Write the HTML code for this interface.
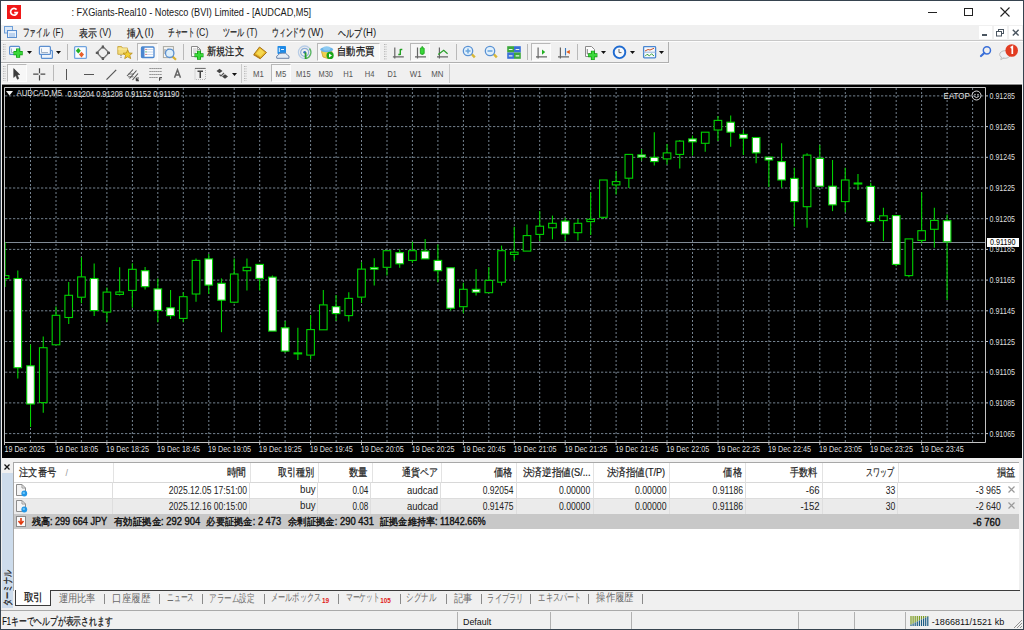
<!DOCTYPE html>
<html><head><meta charset="utf-8"><style>*{box-sizing:border-box}html,body{margin:0;padding:0}body{width:1024px;height:630px;overflow:hidden;position:relative;background:#f0f0f0;font-family:"Liberation Sans",sans-serif}.a{position:absolute}.ic{position:absolute;display:block}svg text{font-family:"Liberation Sans",sans-serif;white-space:pre}</style></head><body>
<div class="a" style="left:1px;top:1px;width:1022px;height:24px;background:#fff;"></div>
<div class="a" style="left:7px;top:5px;width:13.5px;height:13.5px;background:#f01818;"></div>
<svg class="ic" style="left:7px;top:5px" width="14" height="14" viewBox="0 0 14 14"><path d="M9.6 4.6 A3.4 3.4 0 1 0 10.3 7.6 H7.2" fill="none" stroke="#fff" stroke-width="1.7"/></svg>
<div class="a" style="left:928px;top:12px;width:9px;height:1px;background:#222;"></div>
<div class="a" style="left:964px;top:8px;width:9px;height:8px;background:transparent;border:1px solid #222"></div>
<svg class="ic" style="left:1000px;top:7px" width="10" height="10" viewBox="0 0 10 10"><path d="M0.5 0.5 L9.5 9.5 M9.5 0.5 L0.5 9.5" stroke="#222" stroke-width="1.1"/></svg>
<svg class="ic" style="left:4px;top:26px" width="13" height="12" viewBox="0 0 13 12"><rect x="0.5" y="0.5" width="8" height="6.5" fill="#dbe8f7" stroke="#6e9fd8"/><rect x="3.5" y="4.5" width="9" height="7" fill="#eaf2fb" stroke="#5b8fd0"/><path d="M5 8 h6 M5 10 h6" stroke="#8db3e2"/></svg>
<div class="a" style="left:979px;top:26px;width:13px;height:13px;background:#fff;"></div>
<div class="a" style="left:994px;top:26px;width:13px;height:13px;background:#fff;"></div>
<div class="a" style="left:1009px;top:26px;width:13px;height:13px;background:#fff;"></div>
<div class="a" style="left:982px;top:34px;width:5px;height:2px;background:#4a5560;"></div>
<svg class="ic" style="left:996px;top:29px" width="9" height="8" viewBox="0 0 9 8"><rect x="2.5" y="0.5" width="5" height="4" fill="none" stroke="#4a5560"/><rect x="0.5" y="2.5" width="5" height="4.5" fill="#fff" stroke="#4a5560"/></svg>
<svg class="ic" style="left:1012px;top:29px" width="8" height="8" viewBox="0 0 8 8"><path d="M0.8 0.8 L6.6 6.6 M6.6 0.8 L0.8 6.6" stroke="#4a5560" stroke-width="1.4"/></svg>
<div class="a" style="left:1px;top:40px;width:1022px;height:1px;background:#c8c8c8;"></div>
<div class="a" style="left:1px;top:41px;width:1022px;height:1px;background:#fdfdfd;"></div>
<div class="a" style="left:668px;top:42px;width:1px;height:21px;background:#b0b0b0;"></div>
<div class="a" style="left:1px;top:62px;width:668px;height:1px;background:#b0b0b0;"></div>
<div class="a" style="left:1px;top:63px;width:668px;height:1px;background:#fcfcfc;"></div>
<svg class="ic" style="left:3px;top:44px" width="3" height="16" viewBox="0 0 3 16"><path d="M0.5 0 V16 M2 0 V16" stroke="#b4b4b4" stroke-width="1" stroke-dasharray="1 1.4"/></svg>
<svg class="ic" style="left:0px;top:40px" width="40" height="24" viewBox="0 0 40 24"><rect x="9.6" y="6.4" width="10" height="8" rx="1" fill="#f4f8fd" stroke="#5b8fd0" stroke-width="1.2"/><path d="M11.5 8.5 V12.5 H14" fill="none" stroke="#8aa0b8" stroke-width="0.8"/><path d="M18.1 8.5 V17.7 M13.500000000000002 13.1 H22.700000000000003" stroke="#0a9a0a" stroke-width="4.1000000000000005"/><path d="M18.1 9.0 V17.2 M14.000000000000002 13.1 H22.200000000000003" stroke="#3ad83a" stroke-width="2.6"/></svg>
<svg class="ic" style="left:27px;top:51px" width="5" height="3" viewBox="0 0 5 3"><path d="M0 0H5L2.5 3Z" fill="#111"/></svg>
<svg class="ic" style="left:30px;top:40px" width="30" height="24" viewBox="0 0 30 24"><rect x="11.4" y="10.4" width="11" height="8" rx="1" fill="#eef4fb" stroke="#5b8fd0" stroke-width="1.2"/><rect x="9.4" y="6.4" width="11" height="8" rx="1" fill="#f6f9fd" stroke="#5b8fd0" stroke-width="1.2"/><path d="M11.5 8.5 V12.5 H18" fill="none" stroke="#8aa0b8" stroke-width="0.8"/></svg>
<svg class="ic" style="left:56px;top:51px" width="5" height="3" viewBox="0 0 5 3"><path d="M0 0H5L2.5 3Z" fill="#111"/></svg>
<div class="a" style="left:67px;top:44px;width:1px;height:16px;background:#b9b9b9;"></div>
<svg class="ic" style="left:70px;top:40px" width="20" height="24" viewBox="0 0 20 24"><rect x="4.6" y="6.6" width="11.8" height="11.8" rx="1" fill="#fcfdff" stroke="#6fa3de" stroke-width="1.3"/><path d="M8.3 8 L10.8 10.8 L8.3 13.6 L5.8 10.8Z" fill="#22b022"/><path d="M11.5 11.8 L14 14.6 L11.5 17.4 L9 14.6Z" fill="#e8602a"/></svg>
<svg class="ic" style="left:94px;top:44px" width="18" height="18" viewBox="0 0 18 18"><path d="M8.9 2.5 L15 8.8 L8.9 15 L2.8 8.8Z" fill="none" stroke="#777" stroke-width="1.3"/><path d="M8.9 1.5V4.5 M8.9 13V16 M1.8 8.8H4.8 M13 8.8H16" stroke="#5a5a5a" stroke-width="2.2"/></svg>
<svg class="ic" style="left:114px;top:42px" width="20" height="20" viewBox="0 0 20 20"><path d="M3.8 4.5 H7.5 L8.5 6 H13.5 V12.3 H3.8Z" fill="#f3dc7a" stroke="#c8a640" stroke-width="0.9"/><path d="M3.8 7 H13.5" stroke="#fbeea8" stroke-width="1"/><path d="M13.7 7.8 L15 11 L18.3 11.2 L15.8 13.3 L16.7 16.6 L13.7 14.8 L10.7 16.6 L11.6 13.3 L9.1 11.2 L12.4 11Z" fill="#f2d030" stroke="#b88c18" stroke-width="0.8"/><path d="M7 13 V16" stroke="#666" stroke-dasharray="1 0.8"/></svg>
<div class="a" style="left:137px;top:43px;width:21px;height:18px;background:#f7f7f7;border-top:1px solid #b8b8b8;border-left:1px solid #b8b8b8;border-right:1px solid #fdfdfd;border-bottom:1px solid #fdfdfd"></div>
<svg class="ic" style="left:139px;top:44px" width="18" height="16" viewBox="0 0 18 16"><rect x="2.5" y="3" width="12.5" height="10.5" rx="1" fill="#fff" stroke="#4a86d0" stroke-width="1.3"/><rect x="2.5" y="3" width="3" height="10.5" fill="#4a86d0"/><path d="M6.5 5.5H14M6.5 8H14M6.5 10.5H14" stroke="#c6d8f0" stroke-width="1"/><circle cx="7" cy="5.3" r="0.6" fill="#e03030"/><circle cx="7" cy="7.8" r="0.6" fill="#20a020"/><circle cx="7" cy="10.3" r="0.6" fill="#e03030"/></svg>
<svg class="ic" style="left:160px;top:44px" width="20" height="18" viewBox="0 0 20 18"><rect x="3.4" y="2.6" width="10" height="11" fill="#f6f6f4" stroke="#a8a8a0" stroke-width="1"/><path d="M5 5 V10 M8 4.5 V8" stroke="#777" stroke-width="0.8"/><path d="M12 12 L16 15.8" stroke="#d8b030" stroke-width="2.2"/><circle cx="9.7" cy="9.3" r="4.2" fill="#dceefa" stroke="#5a90d0" stroke-width="1.3"/></svg>
<div class="a" style="left:183px;top:44px;width:1px;height:16px;background:#b9b9b9;"></div>
<svg class="ic" style="left:188px;top:44px" width="18" height="18" viewBox="0 0 18 18"><path d="M3.5 2.5 H9.5 L12.5 5.5 V12.5 H3.5Z" fill="#fcfcfc" stroke="#8a8a8a" stroke-width="1"/><path d="M9.5 2.5 V5.5 H12.5" fill="none" stroke="#8a8a8a" stroke-width="0.8"/><path d="M5 5H8.5M5 7H10M5 9H8" stroke="#b0b0b0" stroke-width="0.8"/><path d="M11 6.800000000000001 V15.8 M6.5 11.3 H15.5" stroke="#0a9a0a" stroke-width="3.9"/><path d="M11 7.300000000000001 V15.3 M7.0 11.3 H15.0" stroke="#3ad83a" stroke-width="2.4"/></svg>
<svg class="ic" style="left:252px;top:45px" width="16" height="15" viewBox="0 0 16 15"><path d="M1.8 9.5 L7.5 2 L14.5 7.5 L8.5 13.6Z" fill="#e6b82a" stroke="#a87418" stroke-width="1"/><path d="M4.2 8.6 L8 3.8 L12.5 7.3 L8.5 11.6Z" fill="#f6d850"/><path d="M1.8 9.5 L8.5 13.6" stroke="#b8801a" stroke-width="1.5"/></svg>
<svg class="ic" style="left:274px;top:44px" width="18" height="16" viewBox="0 0 18 16"><rect x="3.5" y="2" width="8.5" height="8" rx="0.8" fill="#1f8ae6"/><path d="M5.3 3.8 V8 M7 5.5 H10" stroke="#e8f4ff" stroke-width="1"/><path d="M2.8 14.3 Q1.6 12 4 11.3 Q5 8.6 8.5 9.2 Q12 8.2 13.5 11 Q15.6 11.4 15 14.3Z" fill="#e4ebf4" stroke="#6a84aa" stroke-width="1"/></svg>
<svg class="ic" style="left:296px;top:44px" width="18" height="17" viewBox="0 0 18 17"><circle cx="8.7" cy="8.3" r="6.3" fill="none" stroke="#b8cde6" stroke-width="1.3"/><circle cx="8.7" cy="8.3" r="4" fill="none" stroke="#8fb0d8" stroke-width="1.2"/><path d="M13.5 4.5 A6.3 6.3 0 0 1 10 14.5" fill="none" stroke="#5cb85c" stroke-width="1.3"/><circle cx="8.7" cy="8.3" r="1.4" fill="#3a72c0"/><path d="M9.6 8.5 V15" stroke="#2aa02a" stroke-width="1.8"/></svg>
<div class="a" style="left:317px;top:43px;width:63px;height:18px;background:#f7f7f7;border-top:1px solid #b8b8b8;border-left:1px solid #b8b8b8;border-right:1px solid #fdfdfd;border-bottom:1px solid #fdfdfd"></div>
<svg class="ic" style="left:318px;top:44px" width="18" height="17" viewBox="0 0 18 17"><path d="M3.5 7.5 L5 13 L10 14.5 L14 10 L14 7.5Z" fill="#f0d050" stroke="#c8a030" stroke-width="0.8"/><ellipse cx="8.7" cy="5.6" rx="6.4" ry="2.6" fill="#6ab4e8"/><ellipse cx="8.7" cy="4.4" rx="3.6" ry="2.2" fill="#8ccaf2"/><circle cx="12.1" cy="11.4" r="3.6" fill="#1aa51a"/><path d="M11 9.4 L14 11.4 L11 13.4Z" fill="#fff"/></svg>
<svg class="ic" style="left:384px;top:44px" width="3" height="16" viewBox="0 0 3 16"><path d="M0.5 0 V16 M2 0 V16" stroke="#b4b4b4" stroke-width="1" stroke-dasharray="1 1.4"/></svg>
<svg class="ic" style="left:390px;top:44px" width="16" height="16" viewBox="0 0 16 16"><path d="M4.8 3.5 V14.5 M2.9 12.8 H13.8" stroke="#666" stroke-width="1.2"/><path d="M10.3 5 V11 M8.3 10.5 H10.3 M10.3 5.5 H12.3" stroke="#22a022" stroke-width="1.4"/></svg>
<div class="a" style="left:410px;top:43px;width:20px;height:18px;background:#f7f7f7;border-top:1px solid #b8b8b8;border-left:1px solid #b8b8b8;border-right:1px solid #fdfdfd;border-bottom:1px solid #fdfdfd"></div>
<svg class="ic" style="left:412px;top:44px" width="16" height="16" viewBox="0 0 16 16"><path d="M5.5 3.5 V14.5 M3 12.8 H14" stroke="#666" stroke-width="1.2"/><path d="M10.2 2 V11" stroke="#22a022" stroke-width="1"/><rect x="8.3" y="3.8" width="3.9" height="6.3" rx="0.8" fill="#3ad83a" stroke="#18a018" stroke-width="0.8"/></svg>
<svg class="ic" style="left:435px;top:44px" width="16" height="16" viewBox="0 0 16 16"><path d="M4.4 3.5 V14.5 M2 12.8 H13" stroke="#666" stroke-width="1.2"/><path d="M3.2 10.5 L8.7 6.2 L12.6 9.7" fill="none" stroke="#2aa02a" stroke-width="1.2"/></svg>
<div class="a" style="left:456px;top:44px;width:1px;height:16px;background:#b9b9b9;"></div>
<svg class="ic" style="left:461px;top:44px" width="16" height="16" viewBox="0 0 16 16"><path d="M5.5 5.5 L9 9" stroke="#c8a830" stroke-width="0"/><path d="M10.6 10 L13.8 13.3" stroke="#d8b838" stroke-width="2.4"/><circle cx="7" cy="7" r="4.7" fill="#e0f0fc" stroke="#5a92d4" stroke-width="1.3"/><path d="M4.5 7 H9.5" stroke="#6aa4dc" stroke-width="1.5"/><path d="M7 4.5 V9.5" stroke="#6aa4dc" stroke-width="1.5"/></svg>
<svg class="ic" style="left:483px;top:44px" width="16" height="16" viewBox="0 0 16 16"><path d="M5.5 5.5 L9 9" stroke="#c8a830" stroke-width="0"/><path d="M10.6 10 L13.8 13.3" stroke="#d8b838" stroke-width="2.4"/><circle cx="7" cy="7" r="4.7" fill="#e0f0fc" stroke="#5a92d4" stroke-width="1.3"/><path d="M4.5 7 H9.5" stroke="#6aa4dc" stroke-width="1.5"/></svg>
<svg class="ic" style="left:506px;top:45px" width="16" height="15" viewBox="0 0 16 15"><rect x="1.2" y="1.2" width="6.8" height="6.3" fill="#3ca83c"/><rect x="8" y="1.2" width="6.8" height="6.3" fill="#3a6fd8"/><rect x="1.2" y="7.5" width="6.8" height="6.3" fill="#3a6fd8"/><rect x="8" y="7.5" width="6.8" height="6.3" fill="#3ca83c"/><path d="M2.8 4.5H6.5M9.6 4.5H13.3M2.8 10.8H6.5M9.6 10.8H13.3" stroke="#e8f4e8" stroke-width="1.2"/></svg>
<div class="a" style="left:527px;top:44px;width:1px;height:16px;background:#b9b9b9;"></div>
<div class="a" style="left:531px;top:43px;width:20px;height:18px;background:#f7f7f7;border-top:1px solid #b8b8b8;border-left:1px solid #b8b8b8;border-right:1px solid #fdfdfd;border-bottom:1px solid #fdfdfd"></div>
<svg class="ic" style="left:533px;top:44px" width="16" height="16" viewBox="0 0 16 16"><path d="M5.1 3.5 V14.5 M3 12.8 H14" stroke="#666" stroke-width="1.2"/><path d="M9 5.4 L12.2 8.1 L9 10.8Z" fill="#22b022"/></svg>
<svg class="ic" style="left:555px;top:44px" width="16" height="16" viewBox="0 0 16 16"><path d="M5.4 3.5 V14.5 M3 12.8 H14" stroke="#666" stroke-width="1.2"/><path d="M10.5 4 V11.5" stroke="#3a78c0" stroke-width="1.1"/><path d="M11.2 8 L14.8 6 V10Z" fill="#e05a1a"/></svg>
<div class="a" style="left:577px;top:44px;width:1px;height:16px;background:#b9b9b9;"></div>
<svg class="ic" style="left:583px;top:44px" width="16" height="18" viewBox="0 0 16 18"><path d="M2.5 2.5 H8.5 L11.5 5.5 V12.5 H2.5Z" fill="#fcfcfc" stroke="#8a8a8a" stroke-width="1"/><path d="M4.3 5 V10 H7" fill="none" stroke="#777" stroke-width="0.9"/><path d="M9.8 6.700000000000001 V15.9 M5.200000000000001 11.3 H14.4" stroke="#0a9a0a" stroke-width="3.9"/><path d="M9.8 7.200000000000001 V15.4 M5.700000000000001 11.3 H13.9" stroke="#3ad83a" stroke-width="2.4"/></svg>
<svg class="ic" style="left:601px;top:51px" width="5" height="3" viewBox="0 0 5 3"><path d="M0 0H5L2.5 3Z" fill="#111"/></svg>
<svg class="ic" style="left:611px;top:44px" width="17" height="17" viewBox="0 0 17 17"><circle cx="8.5" cy="8.3" r="5.8" fill="#f6f9fc" stroke="#1e6ad0" stroke-width="1.9"/><path d="M8 5 V8.6 H10.5" fill="none" stroke="#555" stroke-width="0.9"/></svg>
<svg class="ic" style="left:630px;top:51px" width="5" height="3" viewBox="0 0 5 3"><path d="M0 0H5L2.5 3Z" fill="#111"/></svg>
<svg class="ic" style="left:641px;top:44px" width="17" height="16" viewBox="0 0 17 16"><rect x="2.6" y="2.6" width="12" height="11.2" rx="0.8" fill="#f6f9fd" stroke="#4a86d0" stroke-width="1.3"/><path d="M2.6 8.2H14.6" stroke="#9ab8e0" stroke-width="1"/><path d="M4 7 L7 5.5 L9 6 L13 4.3" fill="none" stroke="#c8552a" stroke-width="1"/><path d="M4 12.3 L6 10.3 L8.5 11.8 L10.5 9.8 L13 12" fill="none" stroke="#3aa03a" stroke-width="1"/></svg>
<svg class="ic" style="left:659px;top:51px" width="5" height="3" viewBox="0 0 5 3"><path d="M0 0H5L2.5 3Z" fill="#111"/></svg>
<svg class="ic" style="left:978px;top:44px" width="14" height="14" viewBox="0 0 14 14"><circle cx="8.9" cy="6.3" r="3.6" fill="none" stroke="#3a6fd8" stroke-width="1.5"/><path d="M6.3 9 L3 12" stroke="#3a6fd8" stroke-width="2.2" stroke-linecap="round"/></svg>
<svg class="ic" style="left:998px;top:42px" width="22" height="19" viewBox="0 0 22 19"><ellipse cx="7" cy="12.5" rx="5.3" ry="3.8" fill="#eef0f4" stroke="#b8b8b8" stroke-width="0.9"/><path d="M3.5 15 L2.8 17.6 L6.2 15.8" fill="#eef0f4" stroke="#b8b8b8" stroke-width="0.9"/><circle cx="13.7" cy="8.5" r="6.3" fill="#e23c22"/><path d="M12.6 5.8 L14.3 4.8 V12" fill="none" stroke="#fff" stroke-width="1.7"/></svg>
<svg class="ic" style="left:3px;top:66px" width="3" height="15" viewBox="0 0 3 15"><path d="M0.5 0 V15 M2 0 V15" stroke="#b4b4b4" stroke-width="1" stroke-dasharray="1 1.4"/></svg>
<div class="a" style="left:7px;top:64px;width:20px;height:18px;background:#f7f7f7;border-top:1px solid #b8b8b8;border-left:1px solid #b8b8b8;border-right:1px solid #fdfdfd;border-bottom:1px solid #fdfdfd"></div>
<svg class="ic" style="left:12px;top:67px" width="10" height="14" viewBox="0 0 10 14"><path d="M1.7 1.6 L7.8 7.6 L5.2 7.9 L6.8 11.6 L5.4 12.3 L3.8 8.6 L1.7 10.4Z" fill="#3c3c3c" stroke="#3c3c3c" stroke-width="0.6" stroke-linejoin="round"/></svg>
<svg class="ic" style="left:31px;top:66px" width="17" height="17" viewBox="0 0 17 17"><path d="M8.5 2.2 V7.3 M8.5 9.2 V14.4 M2.2 8.2 H7.5 M9.5 8.2 H14.3" stroke="#4a4a4a" stroke-width="1.2"/></svg>
<div class="a" style="left:53px;top:65px;width:1px;height:16px;background:#b9b9b9;"></div>
<div class="a" style="left:66px;top:69px;width:1px;height:11px;background:#555;"></div>
<div class="a" style="left:84px;top:73.5px;width:10px;height:1.3px;background:#555;"></div>
<svg class="ic" style="left:104px;top:67px" width="14" height="14" viewBox="0 0 14 14"><path d="M2.5 12.6 L12.2 2.8" stroke="#555" stroke-width="1.2"/></svg>
<svg class="ic" style="left:125px;top:66px" width="16" height="16" viewBox="0 0 16 16"><path d="M2 10 L8 3.5 M4.5 12.5 L11.5 4.5 M7.5 14 L13 7.5" stroke="#555" stroke-width="1.1"/><path d="M3.5 8 H9 M3 10.8 H8.5" stroke="#555" stroke-width="0.8"/><path d="M11.2 12 H14 M11.2 12 V14.8 H14 M11.2 13.4 H13.5" stroke="#444" stroke-width="0.9"/></svg>
<svg class="ic" style="left:148px;top:66px" width="16" height="16" viewBox="0 0 16 16"><path d="M1.5 2.5H14M1.5 5.5H14M1.5 8.5H14M1.5 11.5H10" stroke="#707070" stroke-width="1" stroke-dasharray="1.2 0.8"/><path d="M11.5 11.5 H14 M11.5 11.5 V14.8 M11.5 13 H13.5" stroke="#444" stroke-width="0.9"/></svg>
<svg class="ic" style="left:172px;top:68px" width="11" height="11" viewBox="0 0 11 11"><path d="M2.5 9.8 L5.5 1.8 L8.5 9.8 M3.6 7 H7.4" fill="none" stroke="#666" stroke-width="1.5"/></svg>
<svg class="ic" style="left:193px;top:66px" width="14" height="15" viewBox="0 0 14 15"><rect x="2" y="2.5" width="10.5" height="11" fill="none" stroke="#aaa" stroke-width="0.8" stroke-dasharray="1 1"/><path d="M2 2.4H12.5" stroke="#666" stroke-width="1"/><path d="M4.5 5.2 H10 M7.25 5.2 V12" stroke="#444" stroke-width="1.5"/></svg>
<svg class="ic" style="left:215px;top:68px" width="15" height="13" viewBox="0 0 15 13"><path d="M4.5 0.8 L7.5 3 L4.5 5.2 L1.5 3Z" fill="#444"/><path d="M10 6.3 L13 8.5 L10 10.7 L7 8.5Z" fill="#444"/><path d="M4.5 6.5 L6 8 L9 5" fill="none" stroke="#555" stroke-width="1.2"/></svg>
<svg class="ic" style="left:232px;top:73px" width="5" height="3" viewBox="0 0 5 3"><path d="M0 0H5L2.5 3Z" fill="#111"/></svg>
<div class="a" style="left:241px;top:64px;width:1px;height:20px;background:#c9c9c9;"></div>
<svg class="ic" style="left:244px;top:66px" width="3" height="15" viewBox="0 0 3 15"><path d="M0.5 0 V15 M2 0 V15" stroke="#b4b4b4" stroke-width="1" stroke-dasharray="1 1.4"/></svg>
<div class="a" style="left:271px;top:64px;width:20px;height:18px;background:#f7f7f7;border-top:1px solid #b8b8b8;border-left:1px solid #b8b8b8;border-right:1px solid #fdfdfd;border-bottom:1px solid #fdfdfd"></div>
<div class="a" style="left:449px;top:64px;width:1px;height:20px;background:#c9c9c9;"></div>
<svg width="1020" height="373" viewBox="0 0 1020 373" style="position:absolute;left:2px;top:85px">
<rect x="0" y="0" width="1020" height="373" fill="#000"/>
<line x1="3" y1="10.9" x2="983" y2="10.9" stroke="#74828f" stroke-width="1" stroke-dasharray="2.3 1.7"/>
<line x1="3" y1="41.6" x2="983" y2="41.6" stroke="#74828f" stroke-width="1" stroke-dasharray="2.3 1.7"/>
<line x1="3" y1="72.3" x2="983" y2="72.3" stroke="#74828f" stroke-width="1" stroke-dasharray="2.3 1.7"/>
<line x1="3" y1="103.0" x2="983" y2="103.0" stroke="#74828f" stroke-width="1" stroke-dasharray="2.3 1.7"/>
<line x1="3" y1="133.7" x2="983" y2="133.7" stroke="#74828f" stroke-width="1" stroke-dasharray="2.3 1.7"/>
<line x1="3" y1="164.4" x2="983" y2="164.4" stroke="#74828f" stroke-width="1" stroke-dasharray="2.3 1.7"/>
<line x1="3" y1="195.1" x2="983" y2="195.1" stroke="#74828f" stroke-width="1" stroke-dasharray="2.3 1.7"/>
<line x1="3" y1="225.8" x2="983" y2="225.8" stroke="#74828f" stroke-width="1" stroke-dasharray="2.3 1.7"/>
<line x1="3" y1="256.5" x2="983" y2="256.5" stroke="#74828f" stroke-width="1" stroke-dasharray="2.3 1.7"/>
<line x1="3" y1="287.2" x2="983" y2="287.2" stroke="#74828f" stroke-width="1" stroke-dasharray="2.3 1.7"/>
<line x1="3" y1="317.9" x2="983" y2="317.9" stroke="#74828f" stroke-width="1" stroke-dasharray="2.3 1.7"/>
<line x1="3" y1="348.6" x2="983" y2="348.6" stroke="#74828f" stroke-width="1" stroke-dasharray="2.3 1.7"/>
<line x1="28.5" y1="3" x2="28.5" y2="357" stroke="#74828f" stroke-width="1" stroke-dasharray="2 2"/>
<line x1="54.0" y1="3" x2="54.0" y2="357" stroke="#74828f" stroke-width="1" stroke-dasharray="2 2"/>
<line x1="79.4" y1="3" x2="79.4" y2="357" stroke="#74828f" stroke-width="1" stroke-dasharray="2 2"/>
<line x1="104.9" y1="3" x2="104.9" y2="357" stroke="#74828f" stroke-width="1" stroke-dasharray="2 2"/>
<line x1="130.4" y1="3" x2="130.4" y2="357" stroke="#74828f" stroke-width="1" stroke-dasharray="2 2"/>
<line x1="155.8" y1="3" x2="155.8" y2="357" stroke="#74828f" stroke-width="1" stroke-dasharray="2 2"/>
<line x1="181.3" y1="3" x2="181.3" y2="357" stroke="#74828f" stroke-width="1" stroke-dasharray="2 2"/>
<line x1="206.8" y1="3" x2="206.8" y2="357" stroke="#74828f" stroke-width="1" stroke-dasharray="2 2"/>
<line x1="232.2" y1="3" x2="232.2" y2="357" stroke="#74828f" stroke-width="1" stroke-dasharray="2 2"/>
<line x1="257.7" y1="3" x2="257.7" y2="357" stroke="#74828f" stroke-width="1" stroke-dasharray="2 2"/>
<line x1="283.1" y1="3" x2="283.1" y2="357" stroke="#74828f" stroke-width="1" stroke-dasharray="2 2"/>
<line x1="308.6" y1="3" x2="308.6" y2="357" stroke="#74828f" stroke-width="1" stroke-dasharray="2 2"/>
<line x1="334.1" y1="3" x2="334.1" y2="357" stroke="#74828f" stroke-width="1" stroke-dasharray="2 2"/>
<line x1="359.5" y1="3" x2="359.5" y2="357" stroke="#74828f" stroke-width="1" stroke-dasharray="2 2"/>
<line x1="385.0" y1="3" x2="385.0" y2="357" stroke="#74828f" stroke-width="1" stroke-dasharray="2 2"/>
<line x1="410.4" y1="3" x2="410.4" y2="357" stroke="#74828f" stroke-width="1" stroke-dasharray="2 2"/>
<line x1="435.9" y1="3" x2="435.9" y2="357" stroke="#74828f" stroke-width="1" stroke-dasharray="2 2"/>
<line x1="461.4" y1="3" x2="461.4" y2="357" stroke="#74828f" stroke-width="1" stroke-dasharray="2 2"/>
<line x1="486.8" y1="3" x2="486.8" y2="357" stroke="#74828f" stroke-width="1" stroke-dasharray="2 2"/>
<line x1="512.3" y1="3" x2="512.3" y2="357" stroke="#74828f" stroke-width="1" stroke-dasharray="2 2"/>
<line x1="537.7" y1="3" x2="537.7" y2="357" stroke="#74828f" stroke-width="1" stroke-dasharray="2 2"/>
<line x1="563.2" y1="3" x2="563.2" y2="357" stroke="#74828f" stroke-width="1" stroke-dasharray="2 2"/>
<line x1="588.7" y1="3" x2="588.7" y2="357" stroke="#74828f" stroke-width="1" stroke-dasharray="2 2"/>
<line x1="614.1" y1="3" x2="614.1" y2="357" stroke="#74828f" stroke-width="1" stroke-dasharray="2 2"/>
<line x1="639.6" y1="3" x2="639.6" y2="357" stroke="#74828f" stroke-width="1" stroke-dasharray="2 2"/>
<line x1="665.0" y1="3" x2="665.0" y2="357" stroke="#74828f" stroke-width="1" stroke-dasharray="2 2"/>
<line x1="690.5" y1="3" x2="690.5" y2="357" stroke="#74828f" stroke-width="1" stroke-dasharray="2 2"/>
<line x1="716.0" y1="3" x2="716.0" y2="357" stroke="#74828f" stroke-width="1" stroke-dasharray="2 2"/>
<line x1="741.4" y1="3" x2="741.4" y2="357" stroke="#74828f" stroke-width="1" stroke-dasharray="2 2"/>
<line x1="766.9" y1="3" x2="766.9" y2="357" stroke="#74828f" stroke-width="1" stroke-dasharray="2 2"/>
<line x1="792.3" y1="3" x2="792.3" y2="357" stroke="#74828f" stroke-width="1" stroke-dasharray="2 2"/>
<line x1="817.8" y1="3" x2="817.8" y2="357" stroke="#74828f" stroke-width="1" stroke-dasharray="2 2"/>
<line x1="843.3" y1="3" x2="843.3" y2="357" stroke="#74828f" stroke-width="1" stroke-dasharray="2 2"/>
<line x1="868.7" y1="3" x2="868.7" y2="357" stroke="#74828f" stroke-width="1" stroke-dasharray="2 2"/>
<line x1="894.2" y1="3" x2="894.2" y2="357" stroke="#74828f" stroke-width="1" stroke-dasharray="2 2"/>
<line x1="919.6" y1="3" x2="919.6" y2="357" stroke="#74828f" stroke-width="1" stroke-dasharray="2 2"/>
<line x1="945.1" y1="3" x2="945.1" y2="357" stroke="#74828f" stroke-width="1" stroke-dasharray="2 2"/>
<line x1="970.6" y1="3" x2="970.6" y2="357" stroke="#74828f" stroke-width="1" stroke-dasharray="2 2"/>
<line x1="3" y1="157.5" x2="983.5" y2="157.5" stroke="#808a95" stroke-width="1"/>
<line x1="3.07" y1="157.0" x2="3.07" y2="202.0" stroke="#00d200" stroke-width="1.1"/>
<rect x="-0.73" y="190.6" width="7.6" height="2.9" fill="#000" stroke="#00d200" stroke-width="1.1"/>
<line x1="15.80" y1="185.5" x2="15.80" y2="293.5" stroke="#00d200" stroke-width="1.1"/>
<rect x="12.00" y="193.5" width="7.6" height="89.2" fill="#fff" stroke="#00d200" stroke-width="1.1"/>
<line x1="28.53" y1="259.5" x2="28.53" y2="342.0" stroke="#00d200" stroke-width="1.1"/>
<rect x="24.73" y="280.8" width="7.6" height="38.2" fill="#fff" stroke="#00d200" stroke-width="1.1"/>
<line x1="41.26" y1="251.6" x2="41.26" y2="327.8" stroke="#00d200" stroke-width="1.1"/>
<rect x="37.46" y="262.7" width="7.6" height="54.9" fill="#000" stroke="#00d200" stroke-width="1.1"/>
<line x1="53.99" y1="221.4" x2="53.99" y2="259.8" stroke="#00d200" stroke-width="1.1"/>
<rect x="50.19" y="230.3" width="7.6" height="29.5" fill="#000" stroke="#00d200" stroke-width="1.1"/>
<line x1="66.72" y1="197.0" x2="66.72" y2="238.9" stroke="#00d200" stroke-width="1.1"/>
<rect x="62.92" y="210.3" width="7.6" height="22.2" fill="#000" stroke="#00d200" stroke-width="1.1"/>
<line x1="79.45" y1="172.2" x2="79.45" y2="218.3" stroke="#00d200" stroke-width="1.1"/>
<rect x="75.65" y="191.9" width="7.6" height="20.3" fill="#000" stroke="#00d200" stroke-width="1.1"/>
<line x1="92.18" y1="178.6" x2="92.18" y2="231.0" stroke="#00d200" stroke-width="1.1"/>
<rect x="88.38" y="193.5" width="7.6" height="32.1" fill="#fff" stroke="#00d200" stroke-width="1.1"/>
<line x1="104.91" y1="202.4" x2="104.91" y2="237.3" stroke="#00d200" stroke-width="1.1"/>
<rect x="101.11" y="207.1" width="7.6" height="20.0" fill="#000" stroke="#00d200" stroke-width="1.1"/>
<line x1="117.64" y1="182.3" x2="117.64" y2="210.5" stroke="#00d200" stroke-width="1.1"/>
<rect x="113.84" y="207.0" width="7.6" height="2.4" fill="#000" stroke="#00d200" stroke-width="1.1"/>
<line x1="130.37" y1="178.3" x2="130.37" y2="222.8" stroke="#00d200" stroke-width="1.1"/>
<rect x="126.57" y="184.3" width="7.6" height="21.1" fill="#000" stroke="#00d200" stroke-width="1.1"/>
<line x1="143.10" y1="182.1" x2="143.10" y2="204.6" stroke="#00d200" stroke-width="1.1"/>
<rect x="139.30" y="185.7" width="7.6" height="16.0" fill="#fff" stroke="#00d200" stroke-width="1.1"/>
<line x1="155.83" y1="193.4" x2="155.83" y2="237.2" stroke="#00d200" stroke-width="1.1"/>
<rect x="152.03" y="203.9" width="7.6" height="21.5" fill="#fff" stroke="#00d200" stroke-width="1.1"/>
<line x1="168.56" y1="205.0" x2="168.56" y2="233.9" stroke="#00d200" stroke-width="1.1"/>
<rect x="164.76" y="222.8" width="7.6" height="7.8" fill="#fff" stroke="#00d200" stroke-width="1.1"/>
<line x1="181.29" y1="207.2" x2="181.29" y2="237.2" stroke="#00d200" stroke-width="1.1"/>
<rect x="177.49" y="211.7" width="7.6" height="21.7" fill="#000" stroke="#00d200" stroke-width="1.1"/>
<line x1="194.02" y1="173.4" x2="194.02" y2="216.8" stroke="#00d200" stroke-width="1.1"/>
<rect x="190.22" y="175.4" width="7.6" height="33.6" fill="#000" stroke="#00d200" stroke-width="1.1"/>
<line x1="206.75" y1="169.0" x2="206.75" y2="209.0" stroke="#00d200" stroke-width="1.1"/>
<rect x="202.95" y="173.9" width="7.6" height="26.2" fill="#fff" stroke="#00d200" stroke-width="1.1"/>
<line x1="219.48" y1="193.4" x2="219.48" y2="247.2" stroke="#00d200" stroke-width="1.1"/>
<rect x="215.68" y="198.3" width="7.6" height="16.9" fill="#fff" stroke="#00d200" stroke-width="1.1"/>
<line x1="232.21" y1="173.4" x2="232.21" y2="218.3" stroke="#00d200" stroke-width="1.1"/>
<rect x="228.41" y="189.0" width="7.6" height="28.2" fill="#000" stroke="#00d200" stroke-width="1.1"/>
<line x1="244.94" y1="173.4" x2="244.94" y2="205.4" stroke="#00d200" stroke-width="1.1"/>
<rect x="241.14" y="182.3" width="7.6" height="3.4" fill="#000" stroke="#00d200" stroke-width="1.1"/>
<line x1="257.67" y1="179.0" x2="257.67" y2="205.4" stroke="#00d200" stroke-width="1.1"/>
<rect x="253.87" y="179.4" width="7.6" height="14.0" fill="#fff" stroke="#00d200" stroke-width="1.1"/>
<line x1="270.40" y1="190.6" x2="270.40" y2="246.1" stroke="#00d200" stroke-width="1.1"/>
<rect x="266.60" y="192.1" width="7.6" height="54.0" fill="#fff" stroke="#00d200" stroke-width="1.1"/>
<line x1="283.13" y1="236.1" x2="283.13" y2="267.7" stroke="#00d200" stroke-width="1.1"/>
<rect x="279.33" y="242.8" width="7.6" height="23.3" fill="#fff" stroke="#00d200" stroke-width="1.1"/>
<line x1="295.86" y1="242.8" x2="295.86" y2="275.0" stroke="#00d200" stroke-width="1.1"/>
<rect x="292.06" y="267.9" width="7.6" height="1.0" fill="#000" stroke="#00d200" stroke-width="1.1"/>
<line x1="308.59" y1="230.1" x2="308.59" y2="274.6" stroke="#00d200" stroke-width="1.1"/>
<rect x="304.79" y="244.6" width="7.6" height="25.5" fill="#000" stroke="#00d200" stroke-width="1.1"/>
<line x1="321.32" y1="205.0" x2="321.32" y2="244.8" stroke="#00d200" stroke-width="1.1"/>
<rect x="317.52" y="219.9" width="7.6" height="24.9" fill="#000" stroke="#00d200" stroke-width="1.1"/>
<line x1="334.05" y1="210.1" x2="334.05" y2="236.1" stroke="#00d200" stroke-width="1.1"/>
<rect x="330.25" y="221.7" width="7.6" height="6.9" fill="#fff" stroke="#00d200" stroke-width="1.1"/>
<line x1="346.78" y1="207.2" x2="346.78" y2="236.6" stroke="#00d200" stroke-width="1.1"/>
<rect x="342.98" y="213.4" width="7.6" height="17.2" fill="#000" stroke="#00d200" stroke-width="1.1"/>
<line x1="359.51" y1="177.2" x2="359.51" y2="217.9" stroke="#00d200" stroke-width="1.1"/>
<rect x="355.71" y="184.1" width="7.6" height="28.0" fill="#000" stroke="#00d200" stroke-width="1.1"/>
<line x1="372.24" y1="173.3" x2="372.24" y2="200.4" stroke="#00d200" stroke-width="1.1"/>
<rect x="368.44" y="182.5" width="7.6" height="1.7" fill="#fff" stroke="#00d200" stroke-width="1.1"/>
<line x1="384.97" y1="165.7" x2="384.97" y2="190.6" stroke="#00d200" stroke-width="1.1"/>
<rect x="381.17" y="165.7" width="7.6" height="16.6" fill="#000" stroke="#00d200" stroke-width="1.1"/>
<line x1="397.70" y1="164.3" x2="397.70" y2="182.8" stroke="#00d200" stroke-width="1.1"/>
<rect x="393.90" y="167.7" width="7.6" height="11.1" fill="#fff" stroke="#00d200" stroke-width="1.1"/>
<line x1="410.43" y1="156.8" x2="410.43" y2="177.7" stroke="#00d200" stroke-width="1.1"/>
<rect x="406.63" y="165.7" width="7.6" height="9.7" fill="#000" stroke="#00d200" stroke-width="1.1"/>
<line x1="423.16" y1="153.9" x2="423.16" y2="173.9" stroke="#00d200" stroke-width="1.1"/>
<rect x="419.36" y="166.1" width="7.6" height="7.8" fill="#fff" stroke="#00d200" stroke-width="1.1"/>
<line x1="435.89" y1="159.4" x2="435.89" y2="197.2" stroke="#00d200" stroke-width="1.1"/>
<rect x="432.09" y="175.4" width="7.6" height="10.3" fill="#fff" stroke="#00d200" stroke-width="1.1"/>
<line x1="448.62" y1="182.8" x2="448.62" y2="225.4" stroke="#00d200" stroke-width="1.1"/>
<rect x="444.82" y="182.8" width="7.6" height="40.4" fill="#fff" stroke="#00d200" stroke-width="1.1"/>
<line x1="461.35" y1="197.7" x2="461.35" y2="228.3" stroke="#00d200" stroke-width="1.1"/>
<rect x="457.55" y="204.3" width="7.6" height="17.4" fill="#000" stroke="#00d200" stroke-width="1.1"/>
<line x1="474.08" y1="183.9" x2="474.08" y2="210.6" stroke="#00d200" stroke-width="1.1"/>
<rect x="470.28" y="204.3" width="7.6" height="2.9" fill="#fff" stroke="#00d200" stroke-width="1.1"/>
<line x1="486.81" y1="182.1" x2="486.81" y2="207.7" stroke="#00d200" stroke-width="1.1"/>
<rect x="483.01" y="195.4" width="7.6" height="12.3" fill="#000" stroke="#00d200" stroke-width="1.1"/>
<line x1="499.54" y1="160.6" x2="499.54" y2="200.6" stroke="#00d200" stroke-width="1.1"/>
<rect x="495.74" y="165.7" width="7.6" height="31.5" fill="#000" stroke="#00d200" stroke-width="1.1"/>
<line x1="512.27" y1="141.7" x2="512.27" y2="175.7" stroke="#00d200" stroke-width="1.1"/>
<rect x="508.47" y="167.2" width="7.6" height="2.2" fill="#000" stroke="#00d200" stroke-width="1.1"/>
<line x1="525.00" y1="139.4" x2="525.00" y2="166.1" stroke="#00d200" stroke-width="1.1"/>
<rect x="521.20" y="150.6" width="7.6" height="15.5" fill="#000" stroke="#00d200" stroke-width="1.1"/>
<line x1="537.73" y1="126.1" x2="537.73" y2="156.1" stroke="#00d200" stroke-width="1.1"/>
<rect x="533.93" y="141.2" width="7.6" height="8.2" fill="#000" stroke="#00d200" stroke-width="1.1"/>
<line x1="550.46" y1="130.6" x2="550.46" y2="154.3" stroke="#00d200" stroke-width="1.1"/>
<rect x="546.66" y="138.3" width="7.6" height="4.5" fill="#000" stroke="#00d200" stroke-width="1.1"/>
<line x1="563.19" y1="132.8" x2="563.19" y2="156.1" stroke="#00d200" stroke-width="1.1"/>
<rect x="559.39" y="136.1" width="7.6" height="12.9" fill="#fff" stroke="#00d200" stroke-width="1.1"/>
<line x1="575.92" y1="133.9" x2="575.92" y2="155.4" stroke="#00d200" stroke-width="1.1"/>
<rect x="572.12" y="138.3" width="7.6" height="9.4" fill="#000" stroke="#00d200" stroke-width="1.1"/>
<line x1="588.65" y1="107.2" x2="588.65" y2="149.9" stroke="#00d200" stroke-width="1.1"/>
<rect x="584.85" y="134.3" width="7.6" height="2.3" fill="#000" stroke="#00d200" stroke-width="1.1"/>
<line x1="601.38" y1="95.0" x2="601.38" y2="133.9" stroke="#00d200" stroke-width="1.1"/>
<rect x="597.58" y="95.0" width="7.6" height="37.3" fill="#000" stroke="#00d200" stroke-width="1.1"/>
<line x1="614.11" y1="86.1" x2="614.11" y2="109.4" stroke="#00d200" stroke-width="1.1"/>
<rect x="610.31" y="96.6" width="7.6" height="3.3" fill="#000" stroke="#00d200" stroke-width="1.1"/>
<line x1="626.84" y1="69.4" x2="626.84" y2="103.0" stroke="#00d200" stroke-width="1.1"/>
<rect x="623.04" y="69.4" width="7.6" height="23.8" fill="#000" stroke="#00d200" stroke-width="1.1"/>
<line x1="639.57" y1="64.3" x2="639.57" y2="75.4" stroke="#00d200" stroke-width="1.1"/>
<rect x="635.77" y="69.9" width="7.6" height="2.2" fill="#fff" stroke="#00d200" stroke-width="1.1"/>
<line x1="652.30" y1="47.2" x2="652.30" y2="80.6" stroke="#00d200" stroke-width="1.1"/>
<rect x="648.50" y="72.3" width="7.6" height="4.3" fill="#fff" stroke="#00d200" stroke-width="1.1"/>
<line x1="665.03" y1="59.0" x2="665.03" y2="79.4" stroke="#00d200" stroke-width="1.1"/>
<rect x="661.23" y="67.9" width="7.6" height="6.0" fill="#000" stroke="#00d200" stroke-width="1.1"/>
<line x1="677.76" y1="55.0" x2="677.76" y2="83.4" stroke="#00d200" stroke-width="1.1"/>
<rect x="673.96" y="56.1" width="7.6" height="13.3" fill="#000" stroke="#00d200" stroke-width="1.1"/>
<line x1="690.49" y1="50.6" x2="690.49" y2="70.6" stroke="#00d200" stroke-width="1.1"/>
<rect x="686.69" y="53.9" width="7.6" height="2.9" fill="#fff" stroke="#00d200" stroke-width="1.1"/>
<line x1="703.22" y1="47.2" x2="703.22" y2="66.8" stroke="#00d200" stroke-width="1.1"/>
<rect x="699.42" y="47.2" width="7.6" height="11.1" fill="#000" stroke="#00d200" stroke-width="1.1"/>
<line x1="715.95" y1="31.0" x2="715.95" y2="56.1" stroke="#00d200" stroke-width="1.1"/>
<rect x="712.15" y="35.4" width="7.6" height="9.6" fill="#000" stroke="#00d200" stroke-width="1.1"/>
<line x1="728.68" y1="30.6" x2="728.68" y2="61.7" stroke="#00d200" stroke-width="1.1"/>
<rect x="724.88" y="37.2" width="7.6" height="10.0" fill="#fff" stroke="#00d200" stroke-width="1.1"/>
<line x1="741.41" y1="45.0" x2="741.41" y2="70.1" stroke="#00d200" stroke-width="1.1"/>
<rect x="737.61" y="49.4" width="7.6" height="3.8" fill="#fff" stroke="#00d200" stroke-width="1.1"/>
<line x1="754.14" y1="52.5" x2="754.14" y2="78.3" stroke="#00d200" stroke-width="1.1"/>
<rect x="750.34" y="52.5" width="7.6" height="15.4" fill="#fff" stroke="#00d200" stroke-width="1.1"/>
<line x1="766.87" y1="72.0" x2="766.87" y2="102.1" stroke="#00d200" stroke-width="1.1"/>
<rect x="763.07" y="72.1" width="7.6" height="2.9" fill="#fff" stroke="#00d200" stroke-width="1.1"/>
<line x1="779.60" y1="58.3" x2="779.60" y2="102.8" stroke="#00d200" stroke-width="1.1"/>
<rect x="775.80" y="76.6" width="7.6" height="18.4" fill="#fff" stroke="#00d200" stroke-width="1.1"/>
<line x1="792.33" y1="82.8" x2="792.33" y2="141.7" stroke="#00d200" stroke-width="1.1"/>
<rect x="788.53" y="93.4" width="7.6" height="23.2" fill="#fff" stroke="#00d200" stroke-width="1.1"/>
<line x1="805.06" y1="68.3" x2="805.06" y2="142.8" stroke="#00d200" stroke-width="1.1"/>
<rect x="801.26" y="70.1" width="7.6" height="51.6" fill="#000" stroke="#00d200" stroke-width="1.1"/>
<line x1="817.79" y1="59.9" x2="817.79" y2="101.2" stroke="#00d200" stroke-width="1.1"/>
<rect x="813.99" y="73.4" width="7.6" height="27.8" fill="#fff" stroke="#00d200" stroke-width="1.1"/>
<line x1="830.52" y1="75.0" x2="830.52" y2="126.1" stroke="#00d200" stroke-width="1.1"/>
<rect x="826.72" y="101.2" width="7.6" height="18.7" fill="#fff" stroke="#00d200" stroke-width="1.1"/>
<line x1="843.25" y1="82.8" x2="843.25" y2="127.2" stroke="#00d200" stroke-width="1.1"/>
<rect x="839.45" y="95.0" width="7.6" height="21.6" fill="#000" stroke="#00d200" stroke-width="1.1"/>
<line x1="855.98" y1="89.0" x2="855.98" y2="105.0" stroke="#00d200" stroke-width="1.1"/>
<rect x="852.18" y="98.0" width="7.6" height="1.0" fill="#000" stroke="#00d200" stroke-width="1.1"/>
<line x1="868.71" y1="97.7" x2="868.71" y2="136.6" stroke="#00d200" stroke-width="1.1"/>
<rect x="864.91" y="101.4" width="7.6" height="35.2" fill="#fff" stroke="#00d200" stroke-width="1.1"/>
<line x1="881.44" y1="122.8" x2="881.44" y2="156.1" stroke="#00d200" stroke-width="1.1"/>
<rect x="877.64" y="130.8" width="7.6" height="4.8" fill="#000" stroke="#00d200" stroke-width="1.1"/>
<line x1="894.17" y1="130.6" x2="894.17" y2="181.2" stroke="#00d200" stroke-width="1.1"/>
<rect x="890.37" y="130.6" width="7.6" height="48.8" fill="#fff" stroke="#00d200" stroke-width="1.1"/>
<line x1="906.90" y1="153.9" x2="906.90" y2="192.3" stroke="#00d200" stroke-width="1.1"/>
<rect x="903.10" y="153.9" width="7.6" height="36.7" fill="#000" stroke="#00d200" stroke-width="1.1"/>
<line x1="919.63" y1="107.2" x2="919.63" y2="158.3" stroke="#00d200" stroke-width="1.1"/>
<rect x="915.83" y="145.7" width="7.6" height="9.7" fill="#000" stroke="#00d200" stroke-width="1.1"/>
<line x1="932.36" y1="122.8" x2="932.36" y2="162.8" stroke="#00d200" stroke-width="1.1"/>
<rect x="928.56" y="135.4" width="7.6" height="8.9" fill="#000" stroke="#00d200" stroke-width="1.1"/>
<line x1="945.09" y1="129.4" x2="945.09" y2="215.0" stroke="#00d200" stroke-width="1.1"/>
<rect x="941.29" y="135.7" width="7.6" height="21.1" fill="#fff" stroke="#00d200" stroke-width="1.1"/>
<path d="M2.5 2.5 H983.5 V357.5 H2.5 Z" fill="none" stroke="#c4c4c4" stroke-width="1"/>
<rect x="0" y="0" width="2" height="373" fill="#000"/>
<line x1="2.5" y1="357" x2="2.5" y2="360" stroke="#c4c4c4"/>
<line x1="54.0" y1="357" x2="54.0" y2="360" stroke="#c4c4c4"/>
<line x1="104.9" y1="357" x2="104.9" y2="360" stroke="#c4c4c4"/>
<line x1="155.8" y1="357" x2="155.8" y2="360" stroke="#c4c4c4"/>
<line x1="206.8" y1="357" x2="206.8" y2="360" stroke="#c4c4c4"/>
<line x1="257.7" y1="357" x2="257.7" y2="360" stroke="#c4c4c4"/>
<line x1="308.6" y1="357" x2="308.6" y2="360" stroke="#c4c4c4"/>
<line x1="359.5" y1="357" x2="359.5" y2="360" stroke="#c4c4c4"/>
<line x1="410.4" y1="357" x2="410.4" y2="360" stroke="#c4c4c4"/>
<line x1="461.4" y1="357" x2="461.4" y2="360" stroke="#c4c4c4"/>
<line x1="512.3" y1="357" x2="512.3" y2="360" stroke="#c4c4c4"/>
<line x1="563.2" y1="357" x2="563.2" y2="360" stroke="#c4c4c4"/>
<line x1="614.1" y1="357" x2="614.1" y2="360" stroke="#c4c4c4"/>
<line x1="665.0" y1="357" x2="665.0" y2="360" stroke="#c4c4c4"/>
<line x1="716.0" y1="357" x2="716.0" y2="360" stroke="#c4c4c4"/>
<line x1="766.9" y1="357" x2="766.9" y2="360" stroke="#c4c4c4"/>
<line x1="817.8" y1="357" x2="817.8" y2="360" stroke="#c4c4c4"/>
<line x1="868.7" y1="357" x2="868.7" y2="360" stroke="#c4c4c4"/>
<line x1="919.6" y1="357" x2="919.6" y2="360" stroke="#c4c4c4"/>
<line x1="983.5" y1="10.9" x2="986" y2="10.9" stroke="#c4c4c4"/>
<line x1="983.5" y1="41.6" x2="986" y2="41.6" stroke="#c4c4c4"/>
<line x1="983.5" y1="72.3" x2="986" y2="72.3" stroke="#c4c4c4"/>
<line x1="983.5" y1="103.0" x2="986" y2="103.0" stroke="#c4c4c4"/>
<line x1="983.5" y1="133.7" x2="986" y2="133.7" stroke="#c4c4c4"/>
<line x1="983.5" y1="164.4" x2="986" y2="164.4" stroke="#c4c4c4"/>
<line x1="983.5" y1="195.1" x2="986" y2="195.1" stroke="#c4c4c4"/>
<line x1="983.5" y1="225.8" x2="986" y2="225.8" stroke="#c4c4c4"/>
<line x1="983.5" y1="256.5" x2="986" y2="256.5" stroke="#c4c4c4"/>
<line x1="983.5" y1="287.2" x2="986" y2="287.2" stroke="#c4c4c4"/>
<line x1="983.5" y1="317.9" x2="986" y2="317.9" stroke="#c4c4c4"/>
<line x1="983.5" y1="348.6" x2="986" y2="348.6" stroke="#c4c4c4"/>
</svg>
<div class="a" style="left:1px;top:83px;width:1022px;height:1px;background:#f8f8f8;"></div>
<div class="a" style="left:2px;top:84px;width:1020px;height:1px;background:#8a8a8a;"></div>
<div class="a" style="left:987px;top:238px;width:32px;height:9px;background:#fff;"></div>
<svg class="ic" style="left:6px;top:91px" width="7" height="5" viewBox="0 0 7 5"><path d="M0 0 H7 L3.5 4.5 Z" fill="#f0f0f0"/></svg>
<svg class="ic" style="left:971px;top:90px" width="11" height="11" viewBox="0 0 11 11"><circle cx="5.5" cy="5.5" r="4.5" fill="none" stroke="#e0e0e0"/><circle cx="4" cy="4.5" r="0.7" fill="#e0e0e0"/><circle cx="7" cy="4.5" r="0.7" fill="#e0e0e0"/><path d="M3.3 6.5 Q5.5 8.6 7.7 6.5" fill="none" stroke="#e0e0e0"/></svg>
<div class="a" style="left:1px;top:458px;width:1022px;height:152px;background:#f0f0f0;"></div>
<svg class="ic" style="left:4px;top:464px" width="6" height="6" viewBox="0 0 6 6"><path d="M0.5 0.5 L5.5 5.5 M5.5 0.5 L0.5 5.5" stroke="#111" stroke-width="1.3"/></svg>
<div class="a" style="left:2px;top:473px;width:11px;height:135px;background:#cddcec;"></div>
<div class="a" style="left:13px;top:462px;width:1006px;height:129px;background:#fff;border-top:1px solid #a8a8a8;border-left:1px solid #a8a8a8"></div>
<div class="a" style="left:14px;top:481.5px;width:1005px;height:1px;background:#d8d8d8;"></div>
<div class="a" style="left:112.5px;top:463px;width:1px;height:19px;background:#e3e3e3;"></div>
<div class="a" style="left:250px;top:463px;width:1px;height:19px;background:#e3e3e3;"></div>
<div class="a" style="left:318px;top:463px;width:1px;height:19px;background:#e3e3e3;"></div>
<div class="a" style="left:371.5px;top:463px;width:1px;height:19px;background:#e3e3e3;"></div>
<div class="a" style="left:440.5px;top:463px;width:1px;height:19px;background:#e3e3e3;"></div>
<div class="a" style="left:516px;top:463px;width:1px;height:19px;background:#e3e3e3;"></div>
<div class="a" style="left:593px;top:463px;width:1px;height:19px;background:#e3e3e3;"></div>
<div class="a" style="left:669px;top:463px;width:1px;height:19px;background:#e3e3e3;"></div>
<div class="a" style="left:745.3px;top:463px;width:1px;height:19px;background:#e3e3e3;"></div>
<div class="a" style="left:821.7px;top:463px;width:1px;height:19px;background:#e3e3e3;"></div>
<div class="a" style="left:897.5px;top:463px;width:1px;height:19px;background:#e3e3e3;"></div>
<div class="a" style="left:14px;top:498px;width:1005px;height:16px;background:#ebebeb;"></div>
<div class="a" style="left:14px;top:497.5px;width:1005px;height:1px;background:#dcdcdc;"></div>
<div class="a" style="left:14px;top:514px;width:1005px;height:15px;background:#c8c8c8;"></div>
<div class="a" style="left:112px;top:482px;width:1px;height:16px;background:#dedede;"></div>
<div class="a" style="left:249px;top:482px;width:1px;height:16px;background:#dedede;"></div>
<div class="a" style="left:316.5px;top:482px;width:1px;height:16px;background:#dedede;"></div>
<div class="a" style="left:369.5px;top:482px;width:1px;height:16px;background:#dedede;"></div>
<div class="a" style="left:440px;top:482px;width:1px;height:16px;background:#dedede;"></div>
<div class="a" style="left:515.5px;top:482px;width:1px;height:16px;background:#dedede;"></div>
<div class="a" style="left:592.5px;top:482px;width:1px;height:16px;background:#dedede;"></div>
<div class="a" style="left:668.5px;top:482px;width:1px;height:16px;background:#dedede;"></div>
<div class="a" style="left:745px;top:482px;width:1px;height:16px;background:#dedede;"></div>
<div class="a" style="left:821.5px;top:482px;width:1px;height:16px;background:#dedede;"></div>
<div class="a" style="left:897px;top:482px;width:1px;height:16px;background:#dedede;"></div>
<svg class="ic" style="left:16px;top:484px" width="12" height="13" viewBox="0 0 12 13"><path d="M0.5 0.5 H6 L9.5 4 V11.5 H0.5 Z" fill="#f4f4f4" stroke="#8c8c8c"/><path d="M6 0.5 V4 H9.5" fill="none" stroke="#9a9a9a"/><circle cx="8.3" cy="9.5" r="2.9" fill="#2196e6"/><circle cx="7.8" cy="8.9" r="1.2" fill="#6cc4f6"/></svg>
<svg class="ic" style="left:1008px;top:486px" width="7" height="7" viewBox="0 0 7 7"><path d="M0.5 0.5 L6.5 6.5 M6.5 0.5 L0.5 6.5" stroke="#9a9a9a" stroke-width="1.2"/></svg>
<div class="a" style="left:112px;top:498px;width:1px;height:16px;background:#dedede;"></div>
<div class="a" style="left:249px;top:498px;width:1px;height:16px;background:#dedede;"></div>
<div class="a" style="left:316.5px;top:498px;width:1px;height:16px;background:#dedede;"></div>
<div class="a" style="left:369.5px;top:498px;width:1px;height:16px;background:#dedede;"></div>
<div class="a" style="left:440px;top:498px;width:1px;height:16px;background:#dedede;"></div>
<div class="a" style="left:515.5px;top:498px;width:1px;height:16px;background:#dedede;"></div>
<div class="a" style="left:592.5px;top:498px;width:1px;height:16px;background:#dedede;"></div>
<div class="a" style="left:668.5px;top:498px;width:1px;height:16px;background:#dedede;"></div>
<div class="a" style="left:745px;top:498px;width:1px;height:16px;background:#dedede;"></div>
<div class="a" style="left:821.5px;top:498px;width:1px;height:16px;background:#dedede;"></div>
<div class="a" style="left:897px;top:498px;width:1px;height:16px;background:#dedede;"></div>
<svg class="ic" style="left:16px;top:500px" width="12" height="13" viewBox="0 0 12 13"><path d="M0.5 0.5 H6 L9.5 4 V11.5 H0.5 Z" fill="#f4f4f4" stroke="#8c8c8c"/><path d="M6 0.5 V4 H9.5" fill="none" stroke="#9a9a9a"/><circle cx="8.3" cy="9.5" r="2.9" fill="#2196e6"/><circle cx="7.8" cy="8.9" r="1.2" fill="#6cc4f6"/></svg>
<svg class="ic" style="left:1008px;top:502px" width="7" height="7" viewBox="0 0 7 7"><path d="M0.5 0.5 L6.5 6.5 M6.5 0.5 L0.5 6.5" stroke="#9a9a9a" stroke-width="1.2"/></svg>
<svg class="ic" style="left:16px;top:516px" width="10" height="11" viewBox="0 0 10 11"><rect x="0.5" y="0.5" width="9" height="10" fill="#fbfbfb" stroke="#8a8a8a"/><path d="M5 2 V7 M2.5 5 L5 8 L7.5 5" fill="none" stroke="#e03a10" stroke-width="1.6"/></svg>
<div class="a" style="left:50px;top:590px;width:970px;height:1px;background:#3c3c3c;"></div>
<div class="a" style="left:15px;top:590px;width:36px;height:16px;background:#fff;border-left:1px solid #3c3c3c;border-right:1px solid #3c3c3c;border-bottom:1px solid #3c3c3c"></div>
<div class="a" style="left:104px;top:594px;width:1px;height:10px;background:#8a8a8a;"></div>
<div class="a" style="left:159px;top:594px;width:1px;height:10px;background:#8a8a8a;"></div>
<div class="a" style="left:202px;top:594px;width:1px;height:10px;background:#8a8a8a;"></div>
<div class="a" style="left:264px;top:594px;width:1px;height:10px;background:#8a8a8a;"></div>
<div class="a" style="left:338px;top:594px;width:1px;height:10px;background:#8a8a8a;"></div>
<div class="a" style="left:400px;top:594px;width:1px;height:10px;background:#8a8a8a;"></div>
<div class="a" style="left:446px;top:594px;width:1px;height:10px;background:#8a8a8a;"></div>
<div class="a" style="left:481px;top:594px;width:1px;height:10px;background:#8a8a8a;"></div>
<div class="a" style="left:530px;top:594px;width:1px;height:10px;background:#8a8a8a;"></div>
<div class="a" style="left:588px;top:594px;width:1px;height:10px;background:#8a8a8a;"></div>
<div class="a" style="left:642px;top:594px;width:1px;height:10px;background:#8a8a8a;"></div>
<div class="a" style="left:1px;top:610px;width:1022px;height:1px;background:#a9a9a9;"></div>
<div class="a" style="left:457px;top:612px;width:1px;height:17px;background:#b0b0b0;"></div>
<div class="a" style="left:550px;top:612px;width:1px;height:17px;background:#b0b0b0;"></div>
<div class="a" style="left:631px;top:612px;width:1px;height:17px;background:#b0b0b0;"></div>
<div class="a" style="left:798px;top:612px;width:1px;height:17px;background:#b0b0b0;"></div>
<div class="a" style="left:854px;top:612px;width:1px;height:17px;background:#b0b0b0;"></div>
<div class="a" style="left:905px;top:612px;width:1px;height:17px;background:#b0b0b0;"></div>
<svg class="ic" style="left:910px;top:615px" width="20" height="12" viewBox="0 0 20 12"><rect x="0.40" y="1" width="1.2" height="8.5" fill="#7c9c22"/><rect x="0.40" y="9.5" width="1.2" height="1.5" fill="#1b5c84"/><rect x="2.50" y="1" width="1.2" height="7.5" fill="#7c9c22"/><rect x="2.50" y="8.5" width="1.2" height="2.5" fill="#1b5c84"/><rect x="4.60" y="1" width="1.2" height="6.5" fill="#7c9c22"/><rect x="4.60" y="7.5" width="1.2" height="3.5" fill="#1b5c84"/><rect x="6.70" y="1" width="1.2" height="5.5" fill="#7c9c22"/><rect x="6.70" y="6.5" width="1.2" height="4.5" fill="#1b5c84"/><rect x="8.80" y="1" width="1.2" height="4.5" fill="#7c9c22"/><rect x="8.80" y="5.5" width="1.2" height="5.5" fill="#1b5c84"/><rect x="10.90" y="1" width="1.2" height="3.5" fill="#7c9c22"/><rect x="10.90" y="4.5" width="1.2" height="6.5" fill="#1b5c84"/><rect x="13.00" y="1" width="1.2" height="2.5" fill="#7c9c22"/><rect x="13.00" y="3.5" width="1.2" height="7.5" fill="#1b5c84"/><rect x="15.10" y="1" width="1.2" height="1.5" fill="#7c9c22"/><rect x="15.10" y="2.5" width="1.2" height="8.5" fill="#1b5c84"/><rect x="17.20" y="1" width="1.2" height="0.5" fill="#7c9c22"/><rect x="17.20" y="1.5" width="1.2" height="9.5" fill="#1b5c84"/></svg>
<svg class="ic" style="left:1012px;top:618px" width="11" height="11" viewBox="0 0 11 11"><path d="M10 2 L2 10 M10 5 L5 10 M10 8 L8 10" stroke="#777" stroke-width="0.8"/></svg>
<div class="a" style="left:0px;top:0px;width:1024px;height:1px;background:#36434f;"></div>
<div class="a" style="left:0px;top:0px;width:1px;height:630px;background:#36434f;"></div>
<div class="a" style="left:1023px;top:0px;width:1px;height:630px;background:#36434f;"></div>
<div class="a" style="left:0px;top:629px;width:1024px;height:1px;background:#36434f;"></div>
<svg style="position:absolute;left:0;top:0" width="1024" height="630" viewBox="0 0 1024 630">
<text x="71.40" y="16.10" font-size="10" fill="#1a1a1a" textLength="239.70" lengthAdjust="spacingAndGlyphs">: FXGiants-Real10 - Notesco (BVI) Limited - [AUDCAD,M5]</text>
<text x="22.80" y="36.00" font-size="10.5" fill="#1a1a1a" stroke="#1a1a1a" stroke-width="0.22" textLength="26.60" lengthAdjust="spacingAndGlyphs">ファイル</text>
<text x="52.80" y="35.50" font-size="10.5" fill="#1a1a1a" textLength="10.70" lengthAdjust="spacingAndGlyphs">(F)</text>
<text x="78.80" y="36.50" font-size="10.5" fill="#1a1a1a" stroke="#1a1a1a" stroke-width="0.22" textLength="17.80" lengthAdjust="spacingAndGlyphs">表示</text>
<text x="99.30" y="35.50" font-size="10.5" fill="#1a1a1a" textLength="12.03" lengthAdjust="spacingAndGlyphs">(V)</text>
<text x="126.60" y="36.50" font-size="10.5" fill="#1a1a1a" stroke="#1a1a1a" stroke-width="0.22" textLength="17.10" lengthAdjust="spacingAndGlyphs">挿入</text>
<text x="144.40" y="35.50" font-size="10.5" fill="#1a1a1a" textLength="9.37" lengthAdjust="spacingAndGlyphs">(I)</text>
<text x="168.20" y="35.50" font-size="10.5" fill="#1a1a1a" stroke="#1a1a1a" stroke-width="0.22" textLength="26.50" lengthAdjust="spacingAndGlyphs">チャート</text>
<text x="196.20" y="35.50" font-size="10.5" fill="#1a1a1a" textLength="12.11" lengthAdjust="spacingAndGlyphs">(C)</text>
<text x="222.90" y="36.00" font-size="10.5" fill="#1a1a1a" stroke="#1a1a1a" stroke-width="0.22" textLength="21.20" lengthAdjust="spacingAndGlyphs">ツール</text>
<text x="246.40" y="35.50" font-size="10.5" fill="#1a1a1a" textLength="11.11" lengthAdjust="spacingAndGlyphs">(T)</text>
<text x="271.98" y="36.00" font-size="10.5" fill="#1a1a1a" stroke="#1a1a1a" stroke-width="0.22" textLength="34.04" lengthAdjust="spacingAndGlyphs">ウィンドウ</text>
<text x="307.80" y="35.50" font-size="10.5" fill="#1a1a1a" textLength="15.66" lengthAdjust="spacingAndGlyphs">(W)</text>
<text x="337.70" y="36.50" font-size="10.5" fill="#1a1a1a" stroke="#1a1a1a" stroke-width="0.22" textLength="23.88" lengthAdjust="spacingAndGlyphs">ヘルプ</text>
<text x="362.90" y="35.50" font-size="10.5" fill="#1a1a1a" textLength="13.25" lengthAdjust="spacingAndGlyphs">(H)</text>
<text x="206.80" y="55.40" font-size="10.5" fill="#111" stroke="#111" stroke-width="0.22" textLength="37.00" lengthAdjust="spacingAndGlyphs">新規注文</text>
<text x="337.06" y="55.30" font-size="10.5" fill="#111" stroke="#111" stroke-width="0.22" textLength="37.14" lengthAdjust="spacingAndGlyphs">自動売買</text>
<text x="253.00" y="77.00" font-size="9" fill="#555" textLength="10.80" lengthAdjust="spacingAndGlyphs">M1</text>
<text x="275.60" y="77.00" font-size="9" fill="#555" textLength="10.70" lengthAdjust="spacingAndGlyphs">M5</text>
<text x="296.00" y="77.00" font-size="9" fill="#555" textLength="14.60" lengthAdjust="spacingAndGlyphs">M15</text>
<text x="318.60" y="77.00" font-size="9" fill="#555" textLength="14.40" lengthAdjust="spacingAndGlyphs">M30</text>
<text x="343.30" y="77.00" font-size="9" fill="#555" textLength="9.70" lengthAdjust="spacingAndGlyphs">H1</text>
<text x="364.70" y="77.00" font-size="9" fill="#555" textLength="9.70" lengthAdjust="spacingAndGlyphs">H4</text>
<text x="387.60" y="77.00" font-size="9" fill="#555" textLength="9.30" lengthAdjust="spacingAndGlyphs">D1</text>
<text x="409.70" y="77.00" font-size="9" fill="#555" textLength="11.90" lengthAdjust="spacingAndGlyphs">W1</text>
<text x="431.20" y="77.00" font-size="9" fill="#555" textLength="12.24" lengthAdjust="spacingAndGlyphs">MN</text>
<text x="989.50" y="98.90" font-size="9" fill="#dedede" textLength="25.50" lengthAdjust="spacingAndGlyphs">0.91285</text>
<text x="989.50" y="129.60" font-size="9" fill="#dedede" textLength="25.50" lengthAdjust="spacingAndGlyphs">0.91265</text>
<text x="989.50" y="160.30" font-size="9" fill="#dedede" textLength="25.50" lengthAdjust="spacingAndGlyphs">0.91245</text>
<text x="989.50" y="191.00" font-size="9" fill="#dedede" textLength="25.50" lengthAdjust="spacingAndGlyphs">0.91225</text>
<text x="989.50" y="221.70" font-size="9" fill="#dedede" textLength="25.50" lengthAdjust="spacingAndGlyphs">0.91205</text>
<text x="989.50" y="252.40" font-size="9" fill="#dedede" textLength="25.50" lengthAdjust="spacingAndGlyphs">0.91185</text>
<text x="989.50" y="283.10" font-size="9" fill="#dedede" textLength="25.50" lengthAdjust="spacingAndGlyphs">0.91165</text>
<text x="989.50" y="313.80" font-size="9" fill="#dedede" textLength="25.50" lengthAdjust="spacingAndGlyphs">0.91145</text>
<text x="989.50" y="344.50" font-size="9" fill="#dedede" textLength="25.50" lengthAdjust="spacingAndGlyphs">0.91125</text>
<text x="989.50" y="375.20" font-size="9" fill="#dedede" textLength="25.50" lengthAdjust="spacingAndGlyphs">0.91105</text>
<text x="989.50" y="405.90" font-size="9" fill="#dedede" textLength="25.50" lengthAdjust="spacingAndGlyphs">0.91085</text>
<text x="989.50" y="436.60" font-size="9" fill="#dedede" textLength="25.50" lengthAdjust="spacingAndGlyphs">0.91065</text>
<text x="4.50" y="452.00" font-size="9" fill="#dedede" textLength="40.50" lengthAdjust="spacingAndGlyphs">19 Dec 2025</text>
<text x="55.19" y="452.00" font-size="9" fill="#dedede" textLength="43.00" lengthAdjust="spacingAndGlyphs">19 Dec 18:05</text>
<text x="106.11" y="452.00" font-size="9" fill="#dedede" textLength="43.00" lengthAdjust="spacingAndGlyphs">19 Dec 18:25</text>
<text x="157.03" y="452.00" font-size="9" fill="#dedede" textLength="43.00" lengthAdjust="spacingAndGlyphs">19 Dec 18:45</text>
<text x="207.95" y="452.00" font-size="9" fill="#dedede" textLength="43.00" lengthAdjust="spacingAndGlyphs">19 Dec 19:05</text>
<text x="258.87" y="452.00" font-size="9" fill="#dedede" textLength="43.00" lengthAdjust="spacingAndGlyphs">19 Dec 19:25</text>
<text x="309.79" y="452.00" font-size="9" fill="#dedede" textLength="43.00" lengthAdjust="spacingAndGlyphs">19 Dec 19:45</text>
<text x="360.71" y="452.00" font-size="9" fill="#dedede" textLength="43.00" lengthAdjust="spacingAndGlyphs">19 Dec 20:05</text>
<text x="411.63" y="452.00" font-size="9" fill="#dedede" textLength="43.00" lengthAdjust="spacingAndGlyphs">19 Dec 20:25</text>
<text x="462.55" y="452.00" font-size="9" fill="#dedede" textLength="43.00" lengthAdjust="spacingAndGlyphs">19 Dec 20:45</text>
<text x="513.47" y="452.00" font-size="9" fill="#dedede" textLength="43.00" lengthAdjust="spacingAndGlyphs">19 Dec 21:05</text>
<text x="564.39" y="452.00" font-size="9" fill="#dedede" textLength="43.00" lengthAdjust="spacingAndGlyphs">19 Dec 21:25</text>
<text x="615.31" y="452.00" font-size="9" fill="#dedede" textLength="43.00" lengthAdjust="spacingAndGlyphs">19 Dec 21:45</text>
<text x="666.23" y="452.00" font-size="9" fill="#dedede" textLength="43.00" lengthAdjust="spacingAndGlyphs">19 Dec 22:05</text>
<text x="717.15" y="452.00" font-size="9" fill="#dedede" textLength="43.00" lengthAdjust="spacingAndGlyphs">19 Dec 22:25</text>
<text x="768.07" y="452.00" font-size="9" fill="#dedede" textLength="43.00" lengthAdjust="spacingAndGlyphs">19 Dec 22:45</text>
<text x="818.99" y="452.00" font-size="9" fill="#dedede" textLength="43.00" lengthAdjust="spacingAndGlyphs">19 Dec 23:05</text>
<text x="869.91" y="452.00" font-size="9" fill="#dedede" textLength="43.00" lengthAdjust="spacingAndGlyphs">19 Dec 23:25</text>
<text x="920.83" y="452.00" font-size="9" fill="#dedede" textLength="43.00" lengthAdjust="spacingAndGlyphs">19 Dec 23:45</text>
<text x="16.60" y="96.10" font-size="9" fill="#e2e2e2" textLength="45.50" lengthAdjust="spacingAndGlyphs">AUDCAD,M5</text>
<text x="67.40" y="96.60" font-size="9" fill="#e2e2e2" textLength="111.90" lengthAdjust="spacingAndGlyphs">0.91204 0.91208 0.91152 0.91190</text>
<text x="943.60" y="98.70" font-size="9" fill="#e2e2e2" textLength="26.20" lengthAdjust="spacingAndGlyphs">EATOP</text>
<text x="990.00" y="245.30" font-size="9" fill="#000" textLength="25.50" lengthAdjust="spacingAndGlyphs">0.91190</text>
<text x="19.00" y="476.20" font-size="10.5" fill="#222" stroke="#222" stroke-width="0.22" textLength="37.00" lengthAdjust="spacingAndGlyphs">注文番号</text>
<text x="65.50" y="476.00" font-size="9" fill="#999" textLength="2.50" lengthAdjust="spacingAndGlyphs">/</text>
<text x="226.60" y="476.20" font-size="10.5" fill="#222" stroke="#222" stroke-width="0.22" textLength="19.70" lengthAdjust="spacingAndGlyphs">時間</text>
<text x="277.50" y="475.70" font-size="10.5" fill="#222" stroke="#222" stroke-width="0.22" textLength="36.50" lengthAdjust="spacingAndGlyphs">取引種別</text>
<text x="349.00" y="475.70" font-size="10.5" fill="#222" stroke="#222" stroke-width="0.22" textLength="18.80" lengthAdjust="spacingAndGlyphs">数量</text>
<text x="402.00" y="476.20" font-size="10.5" fill="#222" stroke="#222" stroke-width="0.22" textLength="35.50" lengthAdjust="spacingAndGlyphs">通貨ペア</text>
<text x="494.00" y="475.70" font-size="10.5" fill="#222" stroke="#222" stroke-width="0.22" textLength="18.50" lengthAdjust="spacingAndGlyphs">価格</text>
<text x="522.50" y="476.20" font-size="10.5" fill="#222" stroke="#222" stroke-width="0.22" textLength="68.01" lengthAdjust="spacingAndGlyphs">決済逆指値(S/...</text>
<text x="606.90" y="476.20" font-size="10.5" fill="#222" stroke="#222" stroke-width="0.22" textLength="58.23" lengthAdjust="spacingAndGlyphs">決済指値(T/P)</text>
<text x="723.30" y="475.70" font-size="10.5" fill="#222" stroke="#222" stroke-width="0.22" textLength="18.50" lengthAdjust="spacingAndGlyphs">価格</text>
<text x="789.80" y="476.20" font-size="10.5" fill="#222" stroke="#222" stroke-width="0.22" textLength="27.70" lengthAdjust="spacingAndGlyphs">手数料</text>
<text x="866.20" y="476.20" font-size="10.5" fill="#222" stroke="#222" stroke-width="0.22" textLength="27.77" lengthAdjust="spacingAndGlyphs">スワップ</text>
<text x="997.00" y="475.70" font-size="10.5" fill="#222" stroke="#222" stroke-width="0.22" textLength="18.50" lengthAdjust="spacingAndGlyphs">損益</text>
<text x="168.75" y="494.20" font-size="10" fill="#222" textLength="78.38" lengthAdjust="spacingAndGlyphs">2025.12.05 17:51:00</text>
<text x="300.00" y="493.20" font-size="10" fill="#222" textLength="15.60" lengthAdjust="spacingAndGlyphs">buy</text>
<text x="352.50" y="494.20" font-size="10" fill="#222" textLength="15.89" lengthAdjust="spacingAndGlyphs">0.04</text>
<text x="406.90" y="494.20" font-size="10" fill="#222" textLength="31.13" lengthAdjust="spacingAndGlyphs">audcad</text>
<text x="482.80" y="494.20" font-size="10" fill="#222" textLength="30.58" lengthAdjust="spacingAndGlyphs">0.92054</text>
<text x="559.00" y="494.20" font-size="10" fill="#222" textLength="31.22" lengthAdjust="spacingAndGlyphs">0.00000</text>
<text x="635.00" y="494.20" font-size="10" fill="#222" textLength="31.52" lengthAdjust="spacingAndGlyphs">0.00000</text>
<text x="712.60" y="494.20" font-size="10" fill="#222" textLength="30.52" lengthAdjust="spacingAndGlyphs">0.91186</text>
<text x="805.75" y="494.20" font-size="10" fill="#222" textLength="13.83" lengthAdjust="spacingAndGlyphs">-66</text>
<text x="885.70" y="494.20" font-size="10" fill="#222" textLength="9.62" lengthAdjust="spacingAndGlyphs">33</text>
<text x="975.70" y="494.20" font-size="10" fill="#222" textLength="25.21" lengthAdjust="spacingAndGlyphs">-3 965</text>
<text x="168.75" y="509.70" font-size="10" fill="#222" textLength="78.38" lengthAdjust="spacingAndGlyphs">2025.12.16 00:15:00</text>
<text x="300.00" y="508.70" font-size="10" fill="#222" textLength="15.60" lengthAdjust="spacingAndGlyphs">buy</text>
<text x="352.50" y="509.70" font-size="10" fill="#222" textLength="15.89" lengthAdjust="spacingAndGlyphs">0.08</text>
<text x="406.90" y="509.70" font-size="10" fill="#222" textLength="31.13" lengthAdjust="spacingAndGlyphs">audcad</text>
<text x="482.80" y="509.70" font-size="10" fill="#222" textLength="30.58" lengthAdjust="spacingAndGlyphs">0.91475</text>
<text x="559.00" y="509.70" font-size="10" fill="#222" textLength="31.22" lengthAdjust="spacingAndGlyphs">0.00000</text>
<text x="635.00" y="509.70" font-size="10" fill="#222" textLength="31.52" lengthAdjust="spacingAndGlyphs">0.00000</text>
<text x="712.60" y="509.70" font-size="10" fill="#222" textLength="30.52" lengthAdjust="spacingAndGlyphs">0.91186</text>
<text x="800.43" y="509.70" font-size="10" fill="#222" textLength="19.15" lengthAdjust="spacingAndGlyphs">-152</text>
<text x="885.70" y="509.70" font-size="10" fill="#222" textLength="9.62" lengthAdjust="spacingAndGlyphs">30</text>
<text x="975.70" y="509.70" font-size="10" fill="#222" textLength="25.21" lengthAdjust="spacingAndGlyphs">-2 640</text>
<text x="31.70" y="525.30" font-size="10" fill="#111" stroke="#111" stroke-width="0.38" textLength="75.40" lengthAdjust="spacingAndGlyphs">残高: 299 664 JPY</text>
<text x="114.00" y="525.30" font-size="10" fill="#111" stroke="#111" stroke-width="0.38" textLength="86.29" lengthAdjust="spacingAndGlyphs">有効証拠金: 292 904</text>
<text x="206.40" y="525.30" font-size="10" fill="#111" stroke="#111" stroke-width="0.38" textLength="74.69" lengthAdjust="spacingAndGlyphs">必要証拠金: 2 473</text>
<text x="287.90" y="525.30" font-size="10" fill="#111" stroke="#111" stroke-width="0.38" textLength="85.99" lengthAdjust="spacingAndGlyphs">余剰証拠金: 290 431</text>
<text x="380.20" y="525.30" font-size="10" fill="#111" stroke="#111" stroke-width="0.38" textLength="105.40" lengthAdjust="spacingAndGlyphs">証拠金維持率: 11842.66%</text>
<text x="973.00" y="525.80" font-size="10" fill="#111" stroke="#111" stroke-width="0.38" textLength="27.28" lengthAdjust="spacingAndGlyphs">-6 760</text>
<text x="23.50" y="601.30" font-size="10.5" fill="#111" stroke="#111" stroke-width="0.22" textLength="19.80" lengthAdjust="spacingAndGlyphs">取引</text>
<text x="58.60" y="601.80" font-size="10.5" fill="#6a6a6a" textLength="36.70" lengthAdjust="spacingAndGlyphs">運用比率</text>
<text x="112.14" y="601.80" font-size="10.5" fill="#6a6a6a" textLength="37.86" lengthAdjust="spacingAndGlyphs">口座履歴</text>
<text x="167.00" y="600.80" font-size="10.5" fill="#6a6a6a" textLength="27.01" lengthAdjust="spacingAndGlyphs">ニュース</text>
<text x="209.31" y="601.80" font-size="10.5" fill="#6a6a6a" textLength="45.29" lengthAdjust="spacingAndGlyphs">アラーム設定</text>
<text x="270.95" y="601.30" font-size="10.5" fill="#6a6a6a" textLength="50.20" lengthAdjust="spacingAndGlyphs">メールボックス</text>
<text x="345.70" y="600.80" font-size="10.5" fill="#6a6a6a" textLength="34.04" lengthAdjust="spacingAndGlyphs">マーケット</text>
<text x="406.31" y="601.30" font-size="10.5" fill="#6a6a6a" textLength="30.19" lengthAdjust="spacingAndGlyphs">シグナル</text>
<text x="454.00" y="601.80" font-size="10.5" fill="#6a6a6a" textLength="18.50" lengthAdjust="spacingAndGlyphs">記事</text>
<text x="487.34" y="601.80" font-size="10.5" fill="#6a6a6a" textLength="36.28" lengthAdjust="spacingAndGlyphs">ライブラリ</text>
<text x="538.40" y="601.30" font-size="10.5" fill="#6a6a6a" textLength="42.90" lengthAdjust="spacingAndGlyphs">エキスパート</text>
<text x="596.40" y="601.30" font-size="10.5" fill="#6a6a6a" textLength="37.20" lengthAdjust="spacingAndGlyphs">操作履歴</text>
<text x="322.00" y="603.00" font-size="7" fill="#e02020" font-weight="bold" textLength="7.20" lengthAdjust="spacingAndGlyphs">19</text>
<text x="380.30" y="603.00" font-size="7" fill="#e02020" font-weight="bold" textLength="10.60" lengthAdjust="spacingAndGlyphs">105</text>
<text x="2.30" y="624.50" font-size="10.5" fill="#111" stroke="#111" stroke-width="0.22" textLength="110.20" lengthAdjust="spacingAndGlyphs">F1キーでヘルプが表示されます</text>
<text x="463.00" y="624.50" font-size="9.5" fill="#111" textLength="28.16" lengthAdjust="spacingAndGlyphs">Default</text>
<text x="931.80" y="624.50" font-size="9.5" fill="#111" textLength="72.47" lengthAdjust="spacingAndGlyphs">-1866811/1521 kb</text>
</svg>
<svg class="ic" style="left:2px;top:568px" width="11" height="40" viewBox="0 0 11 40"><text transform="translate(9.3,38) rotate(-90)" font-size="9.5" fill="#222" stroke="#222" stroke-width="0.3" textLength="36" lengthAdjust="spacingAndGlyphs">ターミナル</text></svg>
</body></html>
